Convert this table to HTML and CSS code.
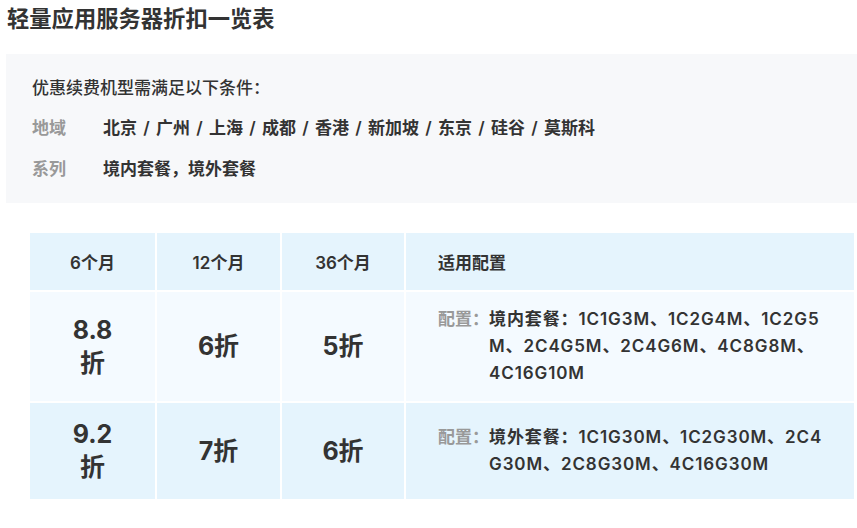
FILE: index.html
```html
<!DOCTYPE html>
<html lang="zh-CN">
<head>
<meta charset="utf-8">
<title>轻量应用服务器折扣一览表</title>
<link rel="stylesheet" href="styles.css">
</head>
<body>
<div class="page">
  <h1 class="title">轻量应用服务器折扣一览表</h1>
  <div class="cond">
    <div class="cond-head">优惠续费机型需满足以下条件：</div>
    <div class="cond-row"><span class="cond-label">地域</span><span class="cond-val">北京<span class="sep">/</span>广州<span class="sep">/</span>上海<span class="sep">/</span>成都<span class="sep">/</span>香港<span class="sep">/</span>新加坡<span class="sep">/</span>东京<span class="sep">/</span>硅谷<span class="sep">/</span>莫斯科</span></div>
    <div class="cond-row"><span class="cond-label">系列</span><span class="cond-val">境内套餐，境外套餐</span></div>
  </div>
  <table class="disc">
    <colgroup>
      <col class="c1"><col class="c2"><col class="c3"><col class="c4">
    </colgroup>
    <thead>
      <tr>
        <th>6个月</th><th>12个月</th><th>36个月</th><th class="left">适用配置</th>
      </tr>
    </thead>
    <tbody>
      <tr class="r1">
        <td class="num">8.8<br>折</td>
        <td class="num">6折</td>
        <td class="num">5折</td>
        <td class="cfg"><div class="cfg-line"><span class="cfg-label">配置：</span><span class="cfg-val">境内套餐：1C1G3M、1C2G4M、1C2G5M、2C4G5M、2C4G6M、4C8G8M、4C16G10M</span></div></td>
      </tr>
      <tr class="r2">
        <td class="num">9.2<br>折</td>
        <td class="num">7折</td>
        <td class="num">6折</td>
        <td class="cfg"><div class="cfg-line"><span class="cfg-label">配置：</span><span class="cfg-val">境外套餐：1C1G30M、1C2G30M、2C4G30M、2C8G30M、4C16G30M</span></div></td>
      </tr>
    </tbody>
  </table>
</div>
</body>
</html>
```
FILE: styles.css
```css
* { box-sizing: border-box; }
html, body { margin: 0; padding: 0; background: #fff; }
body {
  font-family: "Inter", "Noto Sans CJK SC", sans-serif;
  color: #333;
  overflow: hidden;
}
.page { padding: 0 0 0 6px; }
.title {
  margin: 0;
  padding: 4px 0 0 1px;
  font-size: 22.3px;
  line-height: 30px;
  font-weight: 600;
  color: #333;
}
.cond {
  margin-top: 20px;
  background: #f7f8fa;
  padding: 22px 0 18px 26px;
  height: 149px;
}
.cond-head {
  font-size: 17px;
  line-height: 24px;
  font-weight: 500;
  color: #333;
}
.cond-row {
  display: flex;
  margin-top: 16px;
  font-size: 17px;
  line-height: 25px;
  font-weight: 600;
}
.cond-label { width: 71px; color: #999; }
.cond-val { color: #333; }
.sep { display: inline-block; width: 19px; text-align: center; }
.disc {
  margin: 28px 0 0 22px;
  border-collapse: separate;
  border-spacing: 2px;
  table-layout: fixed;
  width: 826px;
}
.c1 { width: 125px; }
.c2 { width: 123px; }
.c3 { width: 122px; }
.c4 { width: 448px; }
th {
  background: #e5f4fd;
  height: 57px;
  font-size: 17px;
  font-weight: 600;
  color: #333;
  text-align: center;
  padding: 0;
}
th.left { text-align: left; padding-left: 32px; }
td { padding: 15px 0; text-align: center; vertical-align: middle; }
.r1 td { background: #f4faff; }
.r2 td { background: #e5f4fd; }
.num {
  font-size: 25px;
  line-height: 33px;
  font-weight: 700;
  color: #333;
}
.cfg { text-align: left; padding: 14px 29px 14px 32px; }
.cfg-line { display: flex; font-size: 17px; line-height: 27px; font-weight: 600; }
.cfg-label { flex: none; color: #999; }
.cfg-val { color: #333; word-break: break-all; letter-spacing: 0.9px; }
```
